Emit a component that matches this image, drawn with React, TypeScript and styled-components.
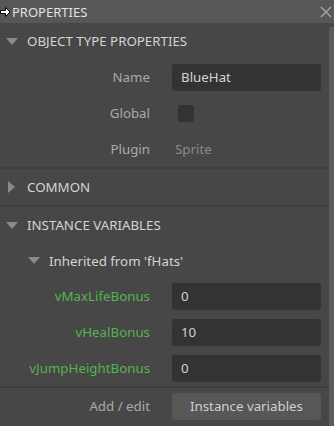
import React from 'react';
import styled, { createGlobalStyle } from 'styled-components';

const GlobalStyle = createGlobalStyle`
  html, body {
    margin: 0;
    padding: 0;
    background: #474747;
  }
  body {
    font-family: 'Noto Sans', 'Open Sans', sans-serif;
  }
`;

const Panel = styled.div`
  width: 334px;
  height: 426px;
  overflow: hidden;
  display: flex;
  flex-direction: column;
  background: #474747;
  color: #d4d4d4;
`;

const TitleBar = styled.header`
  height: 23px;
  flex-shrink: 0;
  display: flex;
  align-items: center;
  background: #575757;
  font-size: 13px;
  color: #e2e2e2;
  padding-right: 1px;
`;

const TitleText = styled.span`
  flex: 1;
  margin-left: 1px;
`;

const CloseButton = styled.button`
  width: 14px;
  height: 20px;
  padding: 0;
  border: none;
  background: none;
  display: flex;
  align-items: center;
  justify-content: center;
`;

const Body = styled.div`
  flex: 1;
  display: flex;
`;

const Content = styled.div`
  flex: 1;
`;

const Scrollbar = styled.div`
  width: 5px;
  margin-top: 4px;
  background: #5b5b5b;
`;

const Section = styled.section<{ $divider?: boolean }>`
  border-bottom: ${(p) => (p.$divider ? '2px solid #3e3e3e' : 'none')};
`;

const SectionHeader = styled.div<{ $indent?: number; $height?: number }>`
  height: ${(p) => p.$height ?? 36}px;
  display: flex;
  align-items: center;
  gap: 10px;
  padding-left: ${(p) => p.$indent ?? 6}px;
  font-size: 13.3px;
  color: #d4d4d4;
`;

const Triangle = styled.span<{ $open?: boolean }>`
  width: 11px;
  height: 11px;
  display: flex;
  align-items: center;
  justify-content: center;

  &::before {
    content: '';
    border-style: solid;
    border-color: transparent;
    ${(p) =>
      p.$open
        ? 'border-width: 7px 6px 0 6px; border-top-color: #8a8a8a;'
        : 'border-width: 6px 0 6px 7px; border-left-color: #8a8a8a;'}
  }
`;

const Row = styled.div`
  height: 36px;
  display: grid;
  grid-template-columns: 150px 1fr;
  column-gap: 22px;
  align-items: center;
  padding-right: 8px;
  font-size: 13.3px;
`;

const Label = styled.span<{ $variable?: boolean }>`
  text-align: right;
  color: ${(p) => (p.$variable ? '#55b44d' : '#a9a9a9')};
  white-space: nowrap;
`;

const TextInput = styled.div`
  height: 27px;
  display: flex;
  align-items: center;
  padding-left: 9px;
  border-radius: 3px;
  background: #333333;
  color: #d4d4d4;
`;

const Checkbox = styled.span`
  width: 16px;
  height: 17px;
  margin-left: 6px;
  border-radius: 3px;
  background: #333333;
`;

const Plain = styled.span`
  padding-left: 3px;
  color: #8a8a8a;
`;

const Button = styled.button`
  height: 27px;
  border: none;
  border-radius: 3px;
  background: #575757;
  color: #d0d0d0;
  font-family: inherit;
  font-size: 13.3px;
`;

const vars = [
  { name: 'vMaxLifeBonus', value: '0' },
  { name: 'vHealBonus', value: '10' },
  { name: 'vJumpHeightBonus', value: '0' },
];

export default function App() {
  return (
    <Panel>
      <GlobalStyle />
      <TitleBar>
        <svg width="11" height="10" viewBox="0 0 11 10">
          <path d="M0.5 3.5h5v-3l4.5 4.5-4.5 4.5v-3h-5z" fill="#fff" stroke="#000" strokeWidth="1" />
        </svg>
        <TitleText>PROPERTIES</TitleText>
        <CloseButton aria-label="Close">
          <svg width="12" height="12" viewBox="0 0 12 12">
            <path d="M1 1l10 10M11 1L1 11" stroke="#a8a8a8" strokeWidth="1.4" />
          </svg>
        </CloseButton>
      </TitleBar>
      <Body>
        <Content>
          <Section $divider>
            <SectionHeader>
              <Triangle $open />
              OBJECT TYPE PROPERTIES
            </SectionHeader>
            <Row>
              <Label>Name</Label>
              <TextInput>BlueHat</TextInput>
            </Row>
            <Row>
              <Label>Global</Label>
              <Checkbox />
            </Row>
            <Row>
              <Label>Plugin</Label>
              <Plain>Sprite</Plain>
            </Row>
          </Section>
          <Section $divider>
            <SectionHeader>
              <Triangle />
              COMMON
            </SectionHeader>
          </Section>
          <Section $divider>
            <SectionHeader>
              <Triangle $open />
              INSTANCE VARIABLES
            </SectionHeader>
            <SectionHeader $indent={28} $height={35}>
              <Triangle $open />
              Inherited from 'fHats'
            </SectionHeader>
            {vars.map((v) => (
              <Row key={v.name}>
                <Label $variable>{v.name}</Label>
                <TextInput>{v.value}</TextInput>
              </Row>
            ))}
          </Section>
          <Row>
            <Label>Add / edit</Label>
            <Button>Instance variables</Button>
          </Row>
        </Content>
        <Scrollbar />
      </Body>
    </Panel>
  );
}
